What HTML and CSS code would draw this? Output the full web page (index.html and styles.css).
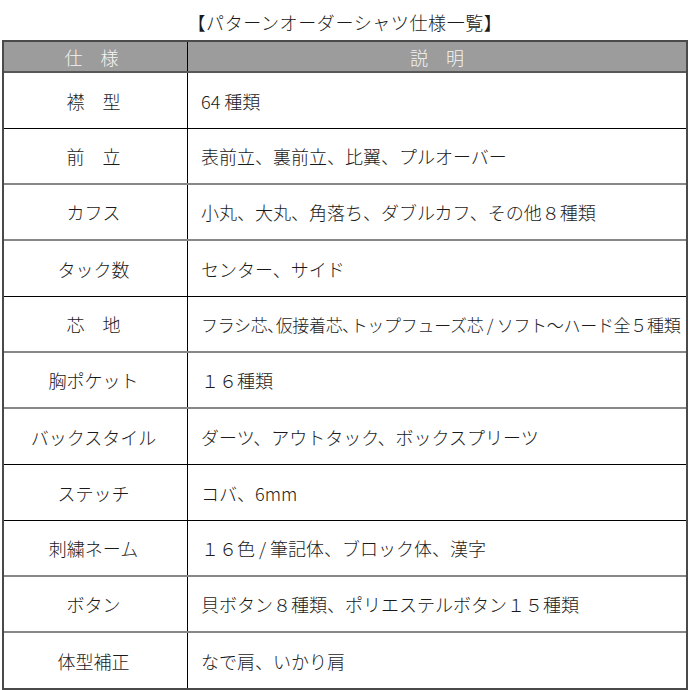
FILE: index.html
```html
<!DOCTYPE html>
<html lang="ja">
<head>
<meta charset="utf-8">
<title>パターンオーダーシャツ仕様一覧</title>
<link rel="stylesheet" href="styles.css">
</head>
<body>
<div class="page">
  <h1 class="title">【パターンオーダーシャツ仕様一覧】</h1>
  <div class="table">
    <div class="row head"><div class="c1">仕　様</div><div class="c2 hc">説　明</div></div>
    <div class="row k"><div class="c1">襟　型</div><div class="c2">64 種類</div></div>
    <div class="row g"><div class="c1">前　立</div><div class="c2">表前立、裏前立、比翼、プルオーバー</div></div>
    <div class="row g"><div class="c1">カフス</div><div class="c2">小丸、大丸、角落ち、ダブルカフ、その他８種類</div></div>
    <div class="row k"><div class="c1">タック数</div><div class="c2">センター、サイド</div></div>
    <div class="row g"><div class="c1">芯　地</div><div class="c2 tight">フラシ芯､仮接着芯､トップフューズ芯 / ソフト～ハード全５種類</div></div>
    <div class="row g"><div class="c1">胸ポケット</div><div class="c2">１６種類</div></div>
    <div class="row k"><div class="c1">バックスタイル</div><div class="c2">ダーツ、アウトタック、ボックスプリーツ</div></div>
    <div class="row k"><div class="c1">ステッチ</div><div class="c2">コバ、6mm</div></div>
    <div class="row g"><div class="c1">刺繍ネーム</div><div class="c2">１６色 / 筆記体、ブロック体、漢字</div></div>
    <div class="row g"><div class="c1">ボタン</div><div class="c2">貝ボタン８種類、ポリエステルボタン１５種類</div></div>
    <div class="row last"><div class="c1">体型補正</div><div class="c2">なで肩、いかり肩</div></div>
  </div>
</div>
</body>
</html>
```

FILE: styles.css
```css
html, body {
  margin: 0;
  padding: 0;
  background: #ffffff;
}
body {
  font-family: "Noto Sans CJK JP", "Noto Sans", sans-serif;
  font-weight: 300;
  color: #1a1a1a;
  font-size: 18px;
}
.page {
  padding: 0 2px;
  width: 686px;
}
.title {
  margin: 0;
  height: 40px;
  font-size: 18px;
  font-weight: 300;
  letter-spacing: 0.6px;
  display: flex;
  align-items: center;
  justify-content: center;
  padding-top: 3px;
  box-sizing: border-box;
  line-height: 1;
}
.table {
  border: 2px solid #4a4a4a;
}
.row {
  display: grid;
  grid-template-columns: 184px 1fr;
  height: 56px;
  box-sizing: border-box;
  border-bottom: 1px solid #000;
}
.row.g {
  border-bottom: 2px solid #878787;
}
.row.last {
  border-bottom: none;
  height: 55px;
}
.row.head {
  height: 31px;
  background: #9c9c9c;
  color: #f4f4f4;
  border-bottom: 2px solid #585858;
}
.c1 {
  border-right: 1px solid #000;
  display: flex;
  align-items: center;
  justify-content: center;
  line-height: 1;
  padding-right: 4px;
}
.head .c1 {
  padding-right: 8px;
}
.c2 {
  display: flex;
  align-items: center;
  padding-left: 13px;
  line-height: 1;
  white-space: nowrap;
}
.c2.hc {
  justify-content: center;
  padding-left: 0;
}
.c2.tight {
  font-size: 17px;
  letter-spacing: -0.3px;
}
```
